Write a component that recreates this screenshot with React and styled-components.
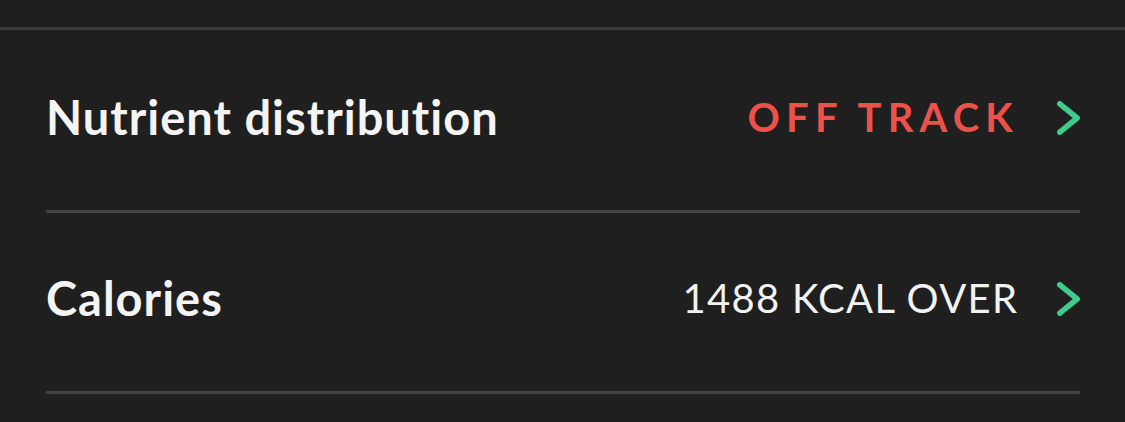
import React from "react";
import styled, { createGlobalStyle } from "styled-components";

const Global = createGlobalStyle`
  html, body { margin: 0; padding: 0; background: #1f1f1f; }
  body { font-family: Lato, "Open Sans", sans-serif; -webkit-font-smoothing: antialiased; }
`;

const Page = styled.div`
  width: 1125px;
  height: 422px;
  background: #1f1f1f;
  padding-top: 27px;
  box-sizing: border-box;
  overflow: hidden;
`;

const TopRule = styled.div`
  height: 3px;
  background: #3a3a3a;
`;

const List = styled.div`
  margin: 0 45px 0 46px;
  padding-top: 2px;
  display: flex;
  flex-direction: column;
`;

const Row = styled.div`
  height: 178px;
  display: flex;
  align-items: center;
  justify-content: space-between;
  border-bottom: 3px solid #434343;
`;

const Label = styled.span`
  color: #f4f4f4;
  font-size: 47px;
  font-weight: 700;
  letter-spacing: 1px;
  margin-top: -9px;
`;

const Right = styled.div`
  display: flex;
  align-items: center;
  gap: 40px;
  margin-top: -6px;
`;

const Value = styled.span`
  color: ${(p) => (p.$alert ? "#ec5249" : "#f2f2f2")};
  font-size: 40px;
  font-weight: ${(p) => (p.$alert ? 700 : 400)};
  letter-spacing: ${(p) => (p.$alert ? "6.2px" : "1.3px")};
  margin-right: ${(p) => (p.$alert ? "-2px" : "-1.3px")};
  margin-top: -3px;
`;

const Chevron = () => (
  <svg width="23" height="34" viewBox="0 0 23 34" fill="none">
    <polyline
      points="2.8,2.8 20.2,17 2.8,31.2"
      stroke="#3ecb8b"
      strokeWidth="5.5"
      strokeLinecap="round"
      strokeLinejoin="round"
    />
  </svg>
);

const rows = [
  { label: "Nutrient distribution", value: "OFF TRACK", alert: true },
  { label: "Calories", value: "1488 KCAL OVER", alert: false },
];

export default function App() {
  return (
    <Page>
      <Global />
      <TopRule />
      <List>
        {rows.map((r) => (
          <Row key={r.label}>
            <Label>{r.label}</Label>
            <Right>
              <Value $alert={r.alert}>{r.value}</Value>
              <Chevron />
            </Right>
          </Row>
        ))}
      </List>
    </Page>
  );
}
